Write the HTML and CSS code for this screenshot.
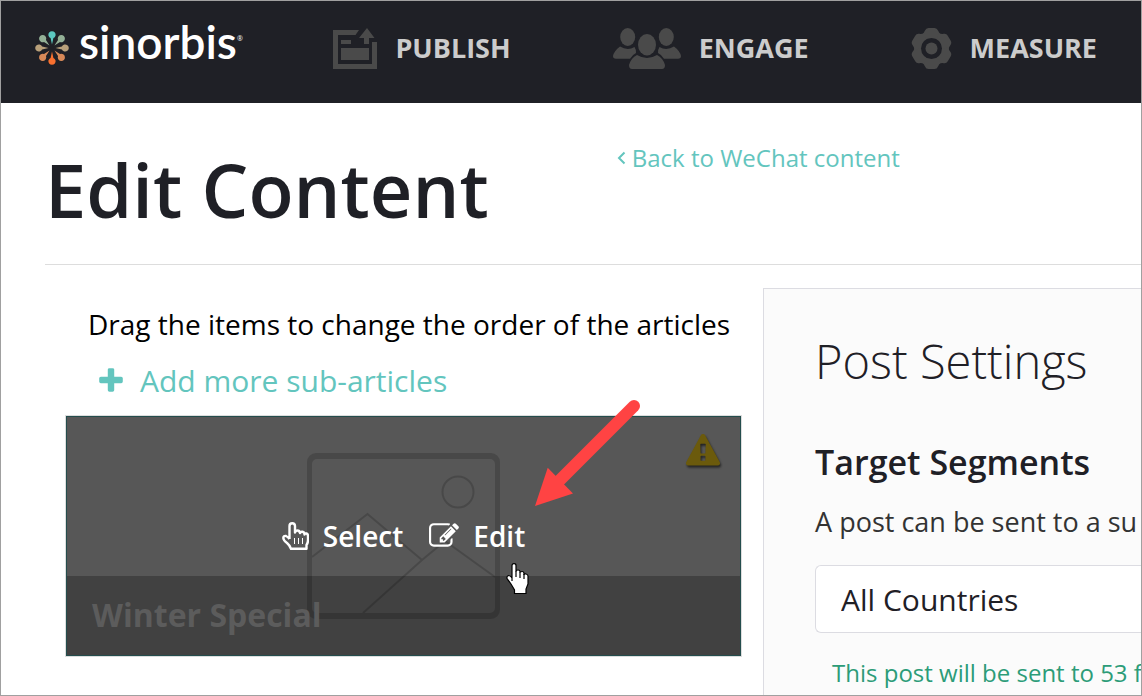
FILE: index.html
```html
<!DOCTYPE html>
<html lang="en">
<head>
    <meta charset="UTF-8">
    <meta name="viewport" content="width=device-width, initial-scale=1.0">
    <title>Edit Content - Sinorbis</title>
    <link rel="stylesheet" href="styles.css">
</head>
<body>
    <header class="topbar">
        <a class="logo" href="#">
            <svg class="logo-mark" viewBox="-17 -17 34 34" aria-hidden="true">
                <defs>
                    <path id="drop" d="M0 -3.5L-1.4 -9.9A3.6 3.6 0 1 1 1.4 -9.9Z"/>
                </defs>
                <use href="#drop" fill="#5cc8c0"/>
                <use href="#drop" fill="#93b096" transform="rotate(45)"/>
                <use href="#drop" fill="#b8a07a" transform="rotate(90)"/>
                <use href="#drop" fill="#d88958" transform="rotate(135)"/>
                <use href="#drop" fill="#f8702f" transform="rotate(180)"/>
                <use href="#drop" fill="#d88958" transform="rotate(225)"/>
                <use href="#drop" fill="#b8a07a" transform="rotate(270)"/>
                <use href="#drop" fill="#93b096" transform="rotate(315)"/>
            </svg>
            <span class="logo-text">sinorbis</span><span class="logo-reg">®</span>
        </a>
        <nav class="nav">
            <a class="nav-item" href="#">
                <svg width="44" height="41" viewBox="0 0 44 41" aria-hidden="true">
                    <path d="M0 2H26L22.500 7H5V36H39V14H44V41H0Z"/>
                    <path d="M8 12H18V16H8ZM8 20H36V32H8ZM34 0L41.500 10H36V16H31V10H26Z"/>
                </svg>
                <span>PUBLISH</span>
            </a>
            <a class="nav-item" href="#">
                <svg width="68" height="41" viewBox="0 0 68 41" aria-hidden="true">
                    <ellipse cx="14.700" cy="9" rx="7.500" ry="9"/>
                    <ellipse cx="53.300" cy="9" rx="7.500" ry="9"/>
                    <ellipse cx="34" cy="16.700" rx="9" ry="10.700"/>
                    <path d="M7 18.500Q14.500 23 21.500 19Q23 21 23 25Q19 27 17 30.700H3Q0 30.700 0 28Q1 23 7 18.500Z"/>
                    <path d="M61 18.500Q53.500 23 46.500 19Q45 21 45 25Q49 27 51 30.700H65Q68 30.700 68 28Q67 23 61 18.500Z"/>
                    <path d="M24 27Q34 33 44 27Q50 30 52 37Q52 41 49 41H19Q16 41 16 37Q18 30 24 27Z"/>
                </svg>
                <span>ENGAGE</span>
            </a>
            <a class="nav-item" href="#">
                <svg width="41" height="41" viewBox="-20.500 -20.500 41 41" aria-hidden="true">
                    <defs>
                        <path id="lobe" d="M-9.500 -14Q-7.500 -15.500 -6.500 -18Q-5.500 -20.500 -3 -20.500H3Q5.500 -20.500 6.500 -18Q7.500 -15.500 9.500 -14L4 -8H-4Z"/>
                    </defs>
                    <circle r="13.500" fill="none" stroke="#4a4a4a" stroke-width="6"/>
                    <g>
                        <use href="#lobe"/>
                        <use href="#lobe" transform="rotate(60)"/>
                        <use href="#lobe" transform="rotate(120)"/>
                        <use href="#lobe" transform="rotate(180)"/>
                        <use href="#lobe" transform="rotate(240)"/>
                        <use href="#lobe" transform="rotate(300)"/>
                    </g>
                    <circle r="10.500" fill="#1f2026"/>
                    <circle r="6"/>
                </svg>
                <span>MEASURE</span>
            </a>
        </nav>
    </header>

    <main class="main">
        <div class="page-head">
            <h1 class="page-title">Edit Content</h1>
            <a class="back-link" href="#">
                <svg width="9" height="14" viewBox="0 0 9 14" aria-hidden="true"><path d="M7.500 1.500L2 7L7.500 12.500"/></svg>
                <span>Back to WeChat content</span>
            </a>
        </div>

        <div class="columns">
            <section class="articles">
                <p class="hint">Drag the items to change the order of the articles</p>
                <button type="button" class="add-button">
                    <svg width="30" height="30" viewBox="0 0 1792 1792" aria-hidden="true"><path d="M1600 736v192q0 40-28 68t-68 28h-416v416q0 40-28 68t-68 28h-192q-40 0-68-28t-28-68v-416h-416q-40 0-68-28t-28-68v-192q0-40 28-68t68-28h416v-416q0-40 28-68t68-28h192q40 0 68 28t28 68v416h416q40 0 68 28t28 68z"/></svg>
                    <span>Add more sub-articles</span>
                </button>

                <article class="card">
                    <div class="card-footer"></div>
                    <svg class="placeholder" width="193" height="166" viewBox="0 0 193 166" aria-hidden="true">
                        <path d="M9 0H184A9 9 0 0 1 193 9V157A9 9 0 0 1 184 166H9A9 9 0 0 1 0 157V9A9 9 0 0 1 9 0ZM10 6A5 5 0 0 0 5 11V155A5 5 0 0 0 10 160H183A5 5 0 0 0 188 155V11A5 5 0 0 0 183 6Z" fill-rule="evenodd"/>
                        <path class="line" d="M5 104L60.500 61L115 107M166.500 39A15.500 15.500 0 1 1 135.500 39A15.500 15.500 0 1 1 166.500 39M56 160L115 107L138 88L188 124"/>
                    </svg>
                    <h2 class="card-title">Winter Special</h2>
                    <svg class="warning" width="34" height="34" viewBox="0 0 1792 1792" role="img" aria-label="Warning"><path d="M1024 1375v-190q0-14-9.500-23.500t-22.500-9.500h-192q-13 0-22.500 9.500t-9.500 23.500v190q0 14 9.500 23.500t22.500 9.500h192q13 0 22.500-9.500t9.500-23.500zm-2-374l18-459q0-12-10-19-13-11-24-11h-220q-11 0-24 11-10 7-10 21l17 457q0 10 10 16.500t24 6.500h185q14 0 23.500-6.500t10.500-16.500zm-14-934l768 1408q35 63-2 126-17 29-46.500 46t-63.500 17h-1536q-34 0-63.500-17t-46.500-46q-37-63-2-126l768-1408q17-31 47-49t65-18 65 18 47 49z"/></svg>
                    <div class="card-actions">
                        <button type="button" class="card-action">
                            <svg width="27" height="28" viewBox="0 0 27 28" aria-hidden="true">
                                <path class="hand" d="M7.500 17V4Q7.500 1.200 10.200 1.200T13 4V10.500Q13.500 8.500 15.500 8.500T18 11Q18.500 9.500 20.500 9.800T22.500 12.500Q23 11 24.500 11.500T26 14V18Q26 21 24.500 23V26.800H9Q8 23.500 5 21Q1.500 18.500 1.300 16Q1.500 13.500 4 14Q6 15 7.500 17"/>
                                <path class="hand-lines" d="M12.500 16V22M16.500 16V22M20.500 16V22"/>
                            </svg>
                            <span>Select</span>
                        </button>
                        <button type="button" class="card-action">
                            <svg width="30" height="30" viewBox="0 0 1792 1792" aria-hidden="true"><path d="M888 1184l116-116-152-152-116 116v56h96v96h56zm440-720q-16-16-33 1l-350 350q-17 17-1 33t33-1l350-350q17-17 1-33zm80 594v190q0 119-84.500 203.500t-203.500 84.500h-832q-119 0-203.500-84.500t-84.500-203.500v-832q0-119 84.500-203.500t203.500-84.500h832q63 0 117 25 15 7 18 23 3 17-9 29l-49 49q-14 14-32 8-23-6-45-6h-832q-66 0-113 47t-47 113v832q0 66 47 113t113 47h832q66 0 113-47t47-113v-126q0-13 9-22l64-64q15-15 35-7t20 29zm-96-738l288 288-672 672h-288v-288zm444 132l-92 92-288-288 92-92q28-28 68-28t68 28l152 152q28 28 28 68t-28 68z"/></svg>
                            <span>Edit</span>
                        </button>
                    </div>
                    <svg class="arrow" width="106" height="108" viewBox="0 0 106 108" aria-hidden="true">
                        <path d="M99 7L20 86" stroke="#ff4343" stroke-width="12" stroke-linecap="round"/>
                        <path d="M0 107L12.700 68.700L38 94.500Z" fill="#ff4343"/>
                    </svg>
                    <svg class="pointer" width="23" height="32" viewBox="0 0 23 32" aria-hidden="true">
                        <path d="M6 18V2.500Q6 .7 8 .7T10 2.500V8.500Q10 7 12 7T14 8.500V9.500Q14 8.500 16 8.500T18 10.500V12Q18 10.500 20 11T22 13V21L20 26V30.500H8.500V27L5 21L1 15.500Q.5 13 2.500 12.500Q4.500 12.500 6 15Z"/>
                        <path d="M10 8V14M14 9V15M18 11V16"/>
                    </svg>
                </article>
            </section>

            <aside class="settings">
                <h2 class="settings-title">Post Settings</h2>
                <h3 class="settings-subtitle">Target Segments</h3>
                <label class="settings-text" for="segment">A post can be sent to a su</label>
                <select class="segment" id="segment">
                    <option>All Countries</option>
                </select>
                <p class="reach">This post will be sent to 53 fo</p>
            </aside>
        </div>
    </main>
</body>
</html>
```
FILE: styles.css
```css
* {
    box-sizing: border-box;
}

body {
    display: flex;
    flex-direction: column;
    height: 100vh;
    margin: 0;
    overflow: hidden;
    border: 1px solid #a0a0a0;
    background-color: #fff;
    color: #1f2026;
    font-family: "Open Sans", sans-serif;
}

h1, h2, h3, p {
    margin: 0;
}

a {
    text-decoration: none;
}

button {
    padding: 0;
    border: none;
    background: none;
    font-family: inherit;
    cursor: pointer;
}

.topbar {
    display: flex;
    flex-shrink: 0;
    align-items: center;
    justify-content: space-between;
    height: 102px;
    padding: 0 44px 8px 34px;
    background-color: #1f2026;
}

.logo {
    display: flex;
    align-items: center;
    color: #fff;
}

.logo-mark {
    width: 34px;
    height: 34px;
    margin-right: 10px;
}

.logo-text {
    padding-bottom: 12px;
    font-family: Lato, sans-serif;
    font-size: 46px;
    font-weight: 600;
    line-height: 54px;
}

.logo-reg {
    padding-bottom: 20px;
    font-size: 7px;
}

.nav {
    display: flex;
    gap: 102px;
}

.nav-item {
    display: flex;
    align-items: center;
    gap: 18px;
    color: #ccc;
    font-size: 27px;
    font-weight: 700;
    line-height: 40px;
}

.nav-item svg {
    fill: #4a4a4a;
}

.main {
    display: flex;
    flex: 1;
    flex-direction: column;
    min-height: 0;
    padding-left: 44px;
}

.page-head {
    display: flex;
    flex-shrink: 0;
    align-items: flex-start;
    gap: 128px;
    height: 162px;
    padding-top: 38px;
    border-bottom: 1px solid #ddd;
}

.page-title {
    font-size: 74px;
    font-weight: 600;
    line-height: 98px;
    white-space: nowrap;
}

.back-link {
    display: flex;
    align-items: center;
    gap: 6px;
    color: #63c5be;
    font-size: 24px;
    line-height: 34px;
    white-space: nowrap;
}

.back-link svg {
    fill: none;
    stroke: #63c5be;
    stroke-width: 2;
}

.columns {
    display: grid;
    flex: 1;
    grid-template-columns: minmax(0, 19fr) minmax(0, 10fr);
    min-height: 0;
    margin-top: 23px;
}

.articles {
    padding: 15px 22px 0 21px;
}

.hint {
    padding-left: 22px;
    color: #000;
    font-size: 28px;
    line-height: 42px;
    white-space: nowrap;
}

.add-button {
    display: flex;
    align-items: center;
    gap: 14px;
    margin: 15px 0 14px 30px;
    color: #63c5be;
    font-size: 30px;
    line-height: 42px;
}

.add-button svg {
    fill: #63c5be;
}

.card {
    display: flex;
    align-items: center;
    justify-content: center;
    position: relative;
    height: 240px;
    border: 1px solid #244d4d;
    outline: 1px solid #ddd;
    background-color: #575757;
}

.card-footer {
    position: absolute;
    right: 0;
    bottom: 0;
    left: 0;
    height: 79px;
    background-color: #414141;
}

.placeholder {
    position: relative;
    opacity: 0.17;
}

.placeholder .line {
    fill: none;
    stroke: #000;
    stroke-width: 2;
}

.card-title {
    position: absolute;
    bottom: 20px;
    left: 25px;
    color: #5c5c5c;
    font-size: 32px;
    line-height: 40px;
}

.warning {
    position: absolute;
    top: 17px;
    right: 20px;
    fill: #6b5a0c;
    filter: drop-shadow(1px 2px 1px #222);
}

.card-actions {
    display: flex;
    align-items: center;
    justify-content: center;
    gap: 26px;
    position: absolute;
    inset: 0;
}

.card-action {
    display: flex;
    align-items: center;
    gap: 14px;
    color: #fff;
    font-size: 28px;
    font-weight: 600;
    line-height: 40px;
}

.card-action svg {
    fill: #fff;
}

.card-action .hand {
    fill: none;
    stroke: #fff;
    stroke-width: 2.4;
    stroke-linejoin: round;
}

.card-action .hand-lines {
    stroke: #fff;
    stroke-width: 1;
}

.arrow {
    position: absolute;
    top: -18px;
    left: 468px;
}

.pointer {
    position: absolute;
    top: 146px;
    left: 439px;
    fill: #fff;
    stroke: #000;
    stroke-width: 1.2;
}

.settings {
    display: flex;
    flex-direction: column;
    padding: 39px 0 0 51px;
    border: 1px solid #dcdce2;
    border-width: 1px 0 0 1px;
    background-color: #fbfbfb;
    overflow: hidden;
    white-space: nowrap;
}

.settings-title {
    font-size: 47px;
    font-weight: 300;
    line-height: 66px;
}

.settings-subtitle {
    margin-top: 44px;
    font-size: 34px;
    font-weight: 600;
    line-height: 48px;
}

.settings-text {
    margin-top: 15px;
    color: #333;
    font-size: 27px;
    line-height: 42px;
}

.segment {
    appearance: none;
    flex-shrink: 0;
    height: 68px;
    margin-top: 22px;
    padding: 0 25px;
    border: 1px solid #dcdce2;
    border-right: none;
    border-radius: 6px 0 0 6px;
    background-color: #fff;
    color: #1f2026;
    font-family: inherit;
    font-size: 30px;
}

.reach {
    margin-top: 23px;
    padding-left: 17px;
    color: #2c9c78;
    font-size: 24px;
    line-height: 34px;
}
```
